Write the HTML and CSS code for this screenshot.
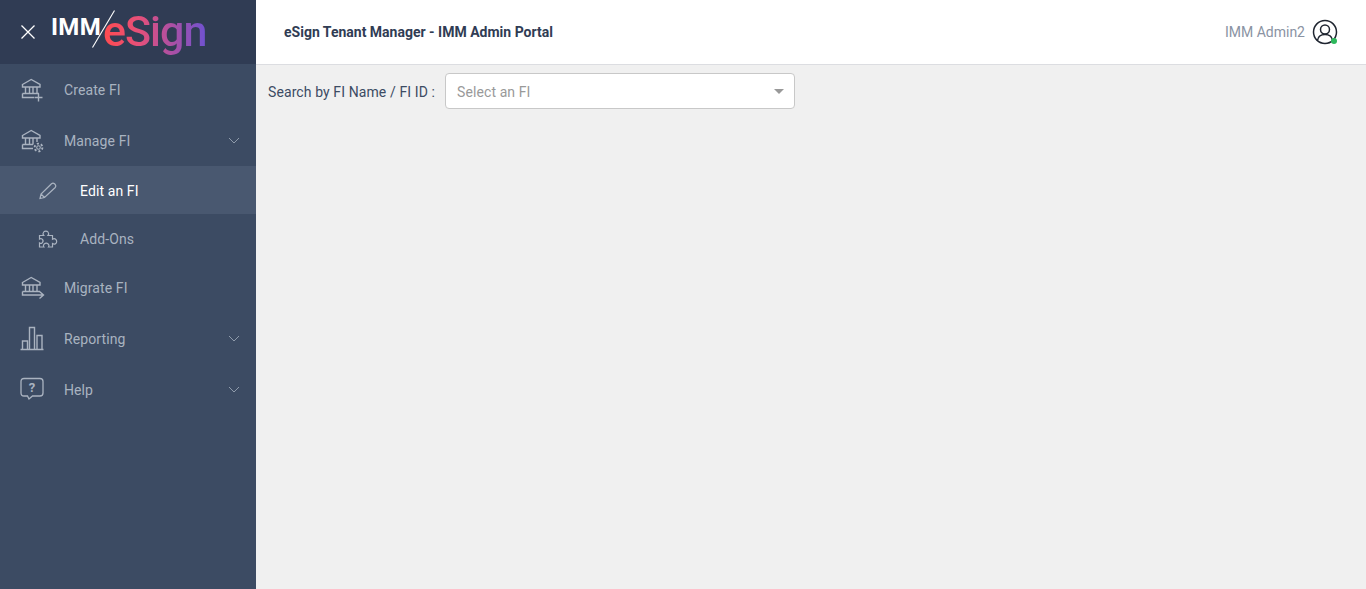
FILE: index.html
```html
<!DOCTYPE html>
<html lang="en">
<head>
<meta charset="utf-8">
<title>eSign Tenant Manager - IMM Admin Portal</title>
<link rel="stylesheet" href="styles.css">
</head>
<body>
<div class="app">
  <aside class="sidebar">
    <div class="brand">
      <svg class="close" width="16" height="16" viewBox="0 0 16 16"><path d="M1.5 1.5l13 13M14.500 1.500l-13 13" stroke="#fff" stroke-width="1.300" fill="none"/></svg>
      <div class="logo">
        <span class="logo-imm">IMM</span>
        <svg class="logo-slash" width="24" height="40" viewBox="0 0 24 40"><path d="M22.500 0.500L0.500 37.500" stroke="#fff" stroke-width="1.100" fill="none"/></svg>
        <span class="logo-esign">eSign</span>
      </div>
    </div>
    <nav class="menu">
      <a class="item">
        <svg class="icon" width="26" height="26" viewBox="0 0 26 26"><g fill="none" stroke="#aab3c0" stroke-width="1.400"><path d="M3.500 7.500L12.200 2.500 21 7.500V10H3.500z"/><path d="M6.500 10v6.500M10.500 10v6.500M14 10v6.500M18 10v6.500"/><path d="M3.500 16.500H20M3.500 16.500v4H15"/><path d="M19.500 16.500v8M15.500 20.500h8"/></g></svg>
        <span class="label">Create FI</span>
      </a>
      <a class="item">
        <svg class="icon" width="26" height="26" viewBox="0 0 26 26"><g fill="none" stroke="#aab3c0" stroke-width="1.400"><path d="M3.500 7.500L12.200 2.500 21 7.500V10H3.500z"/><path d="M6.500 10v6.500M10.500 10v6.500M14 10v6.500M18 10v4"/><path d="M3.500 16.500H14M3.500 16.500v4H14"/><circle cx="19.500" cy="19.500" r="1.800" stroke-width="1.100"/><circle cx="19.500" cy="19.500" r="3.900" stroke-width="1.900" stroke-dasharray="2.100 1.970"/></g></svg>
        <span class="label">Manage FI</span>
        <svg class="chev" width="12" height="7" viewBox="0 0 12 7"><path d="M1 1l5 5 5-5" fill="none" stroke="#8f9bab" stroke-width="1"/></svg>
      </a>
      <a class="item sub active">
        <svg class="icon" width="20" height="20" viewBox="0 0 20 20"><path d="M2 17.500l1-4.500L13.500 2.800q1.500-1.300 3 0l.7.700q1.300 1.500 0 3L6.500 16.500zM3 13l3.500 3.500" fill="none" stroke="#aab3c0" stroke-width="1.200"/></svg>
        <span class="label">Edit an FI</span>
      </a>
      <a class="item sub">
        <svg class="icon" width="20" height="20" viewBox="0 0 20 20"><path d="M1.500 6.500h4.200c-1-1.200-.8-2.500 0-3.500 1-1.300 3.300-1.300 4.300 0 .8 1 1 2.300 0 3.500h4.500v3.700c1-.7 2.300-.7 3.200.1 1.300 1.100 1.300 3.100 0 4.200-.9.800-2.200.8-3.200.1V18h-4c.7-1 .5-2.300-.3-3-1.100-1-2.900-1-4 0-.8.700-1 2-.3 3H1.500v-4c1 .7 2 .5 2.700-.2 1-1 1-2.600 0-3.600-.7-.7-1.700-.9-2.700-.2z" fill="none" stroke="#aab3c0" stroke-width="1.200"/></svg>
        <span class="label">Add-Ons</span>
      </a>
      <a class="item">
        <svg class="icon" width="26" height="26" viewBox="0 0 26 26"><g fill="none" stroke="#aab3c0" stroke-width="1.400"><path d="M3.500 7.500L12.200 2.500 21 7.500V10H3.500z"/><path d="M6.500 10v6.500M10.500 10v6.500M14 10v6.500M18 10v6.500"/><path d="M3.500 16.500H21M3.500 16.500v3.500H24.500M20.500 16.500l4 3.500-4 3.500"/></g></svg>
        <span class="label">Migrate FI</span>
      </a>
      <a class="item">
        <svg class="icon" width="26" height="26" viewBox="0 0 26 26"><g fill="none" stroke="#aab3c0" stroke-width="1.400"><path d="M3.500 23v-8h5v8M10.500 23V1.500h5V23M18 23V9.500h5V23M1.500 23.500h23"/></g></svg>
        <span class="label">Reporting</span>
        <svg class="chev" width="12" height="7" viewBox="0 0 12 7"><path d="M1 1l5 5 5-5" fill="none" stroke="#8f9bab" stroke-width="1"/></svg>
      </a>
      <a class="item">
        <svg class="icon" width="26" height="26" viewBox="0 0 26 26"><path d="M5 1.500h16q3 0 3 3V16q0 3-3 3h-7.500l-3.500 3-1.500-3H5q-3 0-3-3V4.500q0-3 3-3z" fill="none" stroke="#aab3c0" stroke-width="1.300"/><text class="help-mark" x="13" y="15" text-anchor="middle">?</text></svg>
        <span class="label">Help</span>
        <svg class="chev" width="12" height="7" viewBox="0 0 12 7"><path d="M1 1l5 5 5-5" fill="none" stroke="#8f9bab" stroke-width="1"/></svg>
      </a>
    </nav>
  </aside>
  <div class="main">
    <header class="topbar">
      <h1 class="title">eSign Tenant Manager - IMM Admin Portal</h1>
      <div class="user">
        <span class="user-name">IMM Admin2</span>
        <span class="avatar">
          <svg width="26" height="26" viewBox="0 0 26 26"><g fill="none" stroke="#1f2530" stroke-width="1.500"><circle cx="13" cy="13" r="11.500"/><circle cx="13" cy="10.500" r="4.500"/><path d="M5.500 21.500c.5-4 3.500-6 7.500-6s7 2 7.500 6"/></g></svg>
          <span class="status"></span>
        </span>
      </div>
    </header>
    <section class="content">
      <label class="search-label">Search by FI Name / FI ID :</label>
      <div class="select">
        <span class="placeholder">Select an FI</span>
        <span class="caret"></span>
      </div>
    </section>
  </div>
</div>
</body>
</html>
```
FILE: styles.css
```css
* { box-sizing: border-box; }
html, body { margin: 0; height: 100%; }
body { font-family: Roboto, "Liberation Sans", sans-serif; font-size: 14px; overflow: hidden; }
.app { display: flex; height: 589px; }
.sidebar { width: 256px; flex: none; background: #3c4b63; }
.brand { height: 64px; background: #303c54; display: flex; align-items: center; padding-left: 20px; }
.close { flex: none; }
.logo { position: relative; display: flex; margin-left: 15px; width: 160px; height: 64px; }
.logo-imm { position: absolute; left: 0; top: 13px; color: #fff; font: 700 24px/28px Roboto, sans-serif; letter-spacing: 0.3px; }
.logo-slash { position: absolute; left: 41px; top: 10px; }
.logo-esign { position: absolute; left: 52px; top: 6px; font: 500 43px/50px Roboto, sans-serif; letter-spacing: -1px; background: linear-gradient(90deg, #ff4b4f 0%, #e5507a 35%, #a650a8 70%, #6f52d0 100%); -webkit-background-clip: text; background-clip: text; color: transparent; }
.menu { display: flex; flex-direction: column; }
.item { display: flex; align-items: center; height: 51px; padding-left: 19px; color: #a9b3c0; letter-spacing: 0.1px; position: relative; }
.item .icon { flex: none; margin-right: 19px; margin-top: 1px; }
.item .label { flex: 1; }
.chev { flex: none; margin-right: 16px; }
.sub { height: 48px; padding-left: 38px; padding-top: 1px; }
.sub .icon { margin-right: 22px; }
.active { background: #495870; color: #fff; }
.help-mark { font: 700 13px Roboto, sans-serif; fill: #aab3c0; }
.main { flex: 1; display: flex; flex-direction: column; min-width: 0; background: #f0f0f0; }
.topbar { height: 65px; flex: none; background: #fff; border-bottom: 1px solid #dcdde1; display: flex; align-items: center; justify-content: space-between; padding: 0 28px; }
.title { margin: 0; font-size: 14px; font-weight: 700; color: #303c54; }
.user { display: flex; align-items: center; gap: 7px; }
.user-name { color: #8a93a3; font-size: 14px; }
.avatar { position: relative; display: block; width: 26px; height: 26px; }
.avatar svg { display: block; }
.status { position: absolute; right: 1px; bottom: 1px; width: 6px; height: 6px; border-radius: 50%; background: #2eb85c; }
.content { display: flex; align-items: center; padding: 8px 12px; gap: 10px; }
.search-label { color: #3c4b63; font-size: 14px; letter-spacing: 0.1px; padding-top: 1px; }
.select { width: 350px; height: 36px; background: #fff; border: 1px solid #c8c8c8; border-radius: 4px; display: flex; align-items: center; justify-content: space-between; padding: 1px 10px 0 11px; }
.placeholder { color: #999; font-size: 14px; letter-spacing: 0.1px; }
.caret { width: 0; height: 0; border-left: 5px solid transparent; border-right: 5px solid transparent; border-top: 5px solid #999; }
```
